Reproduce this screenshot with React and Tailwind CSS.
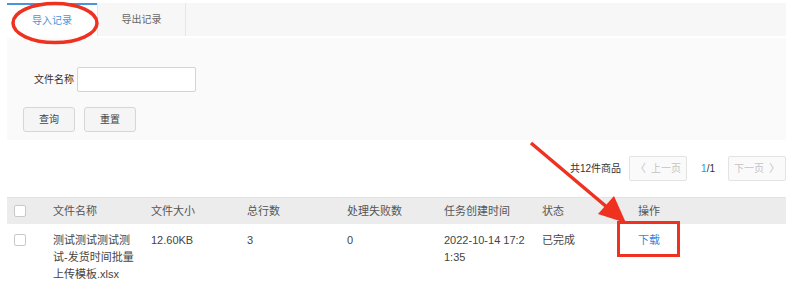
import React from "react";

const font = { fontFamily: '"Liberation Sans", "Noto Sans CJK SC", sans-serif' };

function Checkbox() {
  return <div className="w-[12px] h-[12px] rounded-[2px] border border-[#c9c9c9] bg-white" />;
}

const cols = [
  { w: 38 },
  { w: 98, label: "文件名称" },
  { w: 96, label: "文件大小" },
  { w: 100, label: "总行数" },
  { w: 97, label: "处理失败数" },
  { w: 98, label: "任务创建时间" },
  { w: 96, label: "状态" },
  { w: 156, label: "操作" },
];

export default function App() {
  return (
    <div className="relative w-[800px] h-[289px] bg-white overflow-hidden text-[#333]" style={font}>
      {/* Tabs */}
      <div className="mt-[3px] ml-[7px] w-[779px] h-[33px] flex bg-[#f7f7f7]">
        <div className="w-[90px] h-full bg-white border-t-2 border-[#4a94dc] flex items-center justify-center text-[10px] text-[#4a94dc]">
          导入记录
        </div>
        <div className="w-[89px] h-full border-l border-r border-[#e6e6e6] flex items-center justify-center text-[10px] text-[#666]">
          导出记录
        </div>
      </div>

      {/* Filter panel */}
      <div className="mt-[2px] ml-[7px] w-[779px] h-[102px] bg-[#fafafa] pt-[29px]">
        <div className="flex items-center h-[25px]">
          <div className="w-[70px] text-right text-[10px] text-[#333] pr-[3px]">文件名称</div>
          <div className="w-[119px] h-[25px] bg-white border border-[#d4d4d4] rounded-[2px]" />
        </div>
        <div className="flex mt-[15px] ml-[16px] gap-[9px]">
          <div className="w-[52px] h-[25px] bg-[#f5f5f5] border border-[#d6d6d6] rounded-[3px] flex items-center justify-center text-[10px] text-[#444]">
            查询
          </div>
          <div className="w-[52px] h-[25px] bg-[#f5f5f5] border border-[#d6d6d6] rounded-[3px] flex items-center justify-center text-[10px] text-[#444]">
            重置
          </div>
        </div>
      </div>

      {/* Pagination */}
      <div className="mt-[16px] w-[786px] flex justify-end items-center h-[25px] text-[10px]">
        <span className="text-[#333]">共12件商品</span>
        <div className="ml-[8px] w-[58px] h-[25px] border border-[#e3e3e3] bg-[#fafafa] rounded-[2px] flex items-center justify-center text-[#c4c4c4] gap-[5px]">
          <span className="text-[11px]">〈</span>
          <span>上一页</span>
        </div>
        <span className="ml-[14px] mr-[13px]">
          <span className="text-[#3d8fe0]">1</span>
          <span className="text-[#333]">/1</span>
        </span>
        <div className="w-[58px] h-[25px] border border-[#e3e3e3] bg-[#fafafa] rounded-[2px] flex items-center justify-center text-[#c4c4c4] gap-[5px]">
          <span>下一页</span>
          <span className="text-[11px]">〉</span>
        </div>
      </div>

      {/* Table */}
      <table className="mt-[16px] ml-[7px] w-[779px] table-fixed border-collapse text-[11px]">
        <colgroup>
          {cols.map((c, i) => (
            <col key={i} style={{ width: c.w }} />
          ))}
        </colgroup>
        <thead>
          <tr className="bg-[#ececec] h-[26px] border-t border-[#e2e2e2]">
            <th className="pl-[7px] text-left align-middle font-normal">
              <Checkbox />
            </th>
            {cols.slice(1).map((c, i) => (
              <th key={i} className="px-[8px] text-left font-normal text-[#555] align-middle">
                {c.label}
              </th>
            ))}
          </tr>
        </thead>
        <tbody>
          <tr className="align-top">
            <td className="pl-[7px] pt-[10px]">
              <Checkbox />
            </td>
            <td className="px-[8px] pt-[8px] leading-[17px] break-all text-[#444]">测试测试测试测试-发货时间批量上传模板.xlsx</td>
            <td className="px-[8px] pt-[8px] leading-[17px] text-[#444]">12.60KB</td>
            <td className="px-[8px] pt-[8px] leading-[17px] text-[#444]">3</td>
            <td className="px-[8px] pt-[8px] leading-[17px] text-[#444]">0</td>
            <td className="px-[8px] pt-[8px] leading-[17px] break-all text-[#444]">2022-10-14 17:21:35</td>
            <td className="px-[8px] pt-[8px] leading-[17px] text-[#444]">已完成</td>
            <td className="px-[8px] pt-[8px] leading-[17px] text-[#2f8ae0]">下载</td>
          </tr>
        </tbody>
      </table>

      {/* Annotations */}
      <svg className="absolute left-0 top-0 pointer-events-none" width="800" height="289" viewBox="0 0 800 289">
        <ellipse cx="55" cy="23" rx="42" ry="19.5" fill="none" stroke="#ef3120" strokeWidth="3.5" />
        <line x1="531" y1="143" x2="608" y2="208" stroke="#ef3120" strokeWidth="3.5" />
        <polygon points="626,223 598,214 614,196" fill="#ef3120" />
        <rect x="618.5" y="222.5" width="60" height="33" fill="none" stroke="#ef3120" strokeWidth="3" />
      </svg>
    </div>
  );
}
